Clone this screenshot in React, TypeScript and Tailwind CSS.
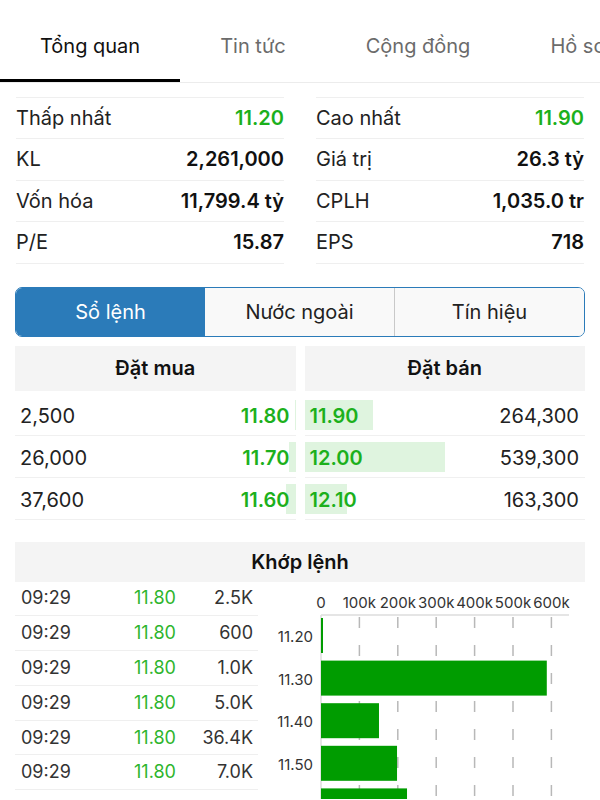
import React from "react";

const TABS = ["Tổng quan", "Tin tức", "Cộng đồng", "Hồ sơ"];

type Stat = { label: string; value: string; tone?: "up" | "ref" };

const STATS: [Stat, Stat][] = [
  [
    { label: "Tham chiếu", value: "11.70", tone: "ref" },
    { label: "Mở cửa", value: "11.80", tone: "up" },
  ],
  [
    { label: "Thấp nhất", value: "11.20", tone: "up" },
    { label: "Cao nhất", value: "11.90", tone: "up" },
  ],
  [
    { label: "KL", value: "2,261,000" },
    { label: "Giá trị", value: "26.3 tỷ" },
  ],
  [
    { label: "Vốn hóa", value: "11,799.4 tỷ" },
    { label: "CPLH", value: "1,035.0 tr" },
  ],
  [
    { label: "P/E", value: "15.87" },
    { label: "EPS", value: "718" },
  ],
];

const BIDS = [
  { qty: "2,500", vol: 2500, price: "11.80" },
  { qty: "26,000", vol: 26000, price: "11.70" },
  { qty: "37,600", vol: 37600, price: "11.60" },
];

const ASKS = [
  { qty: "264,300", vol: 264300, price: "11.90" },
  { qty: "539,300", vol: 539300, price: "12.00" },
  { qty: "163,300", vol: 163300, price: "12.10" },
];

const MATCHES = [
  { time: "09:29", price: "11.80", vol: "2.5K" },
  { time: "09:29", price: "11.80", vol: "600" },
  { time: "09:29", price: "11.80", vol: "1.0K" },
  { time: "09:29", price: "11.80", vol: "5.0K" },
  { time: "09:29", price: "11.80", vol: "36.4K" },
  { time: "09:29", price: "11.80", vol: "7.0K" },
];

const VOL_BY_PRICE = [
  { price: "11.20", vol: 4000 },
  { price: "11.30", vol: 588000 },
  { price: "11.40", vol: 151000 },
  { price: "11.50", vol: 198000 },
  { price: "11.60", vol: 224000 },
];

// px per share for order book depth bars
const DEPTH_SCALE = 0.00026;

function StatCell({ s }: { s: Stat }) {
  const valueClass =
    s.tone === "up"
      ? "text-[#1cb01c] font-semibold"
      : s.tone === "ref"
      ? "text-[#e2b400] font-semibold"
      : "text-[#111] font-semibold";
  return (
    <div className="h-[41.5px] flex items-center justify-between border-b border-[#efefef]">
      <span className="text-[#222]">{s.label}</span>
      <span className={valueClass}>{s.value}</span>
    </div>
  );
}

function VolumeChart() {
  const x0 = 63;
  const perK = 0.384; // px per 1k
  const ticks = [0, 100, 200, 300, 400, 500, 600];
  return (
    <svg width="327" height="217" className="block">
      {/* tick labels */}
      {ticks.map((t) => (
        <text
          key={t}
          x={x0 + t * perK}
          y={26}
          textAnchor="middle"
          fontSize="15"
          fontFamily="Inter, sans-serif"
          fill="#333"
        >
          {t === 0 ? "0" : `${t}k`}
        </text>
      ))}
      <line x1={x0} y1={33} x2={311} y2={33} stroke="#dcdcdc" strokeWidth="1.5" />
      <line x1={x0} y1={33} x2={x0} y2={217} stroke="#dcdcdc" strokeWidth="1.5" />
      {ticks.slice(1).map((t) => (
        <line
          key={t}
          x1={x0 + t * perK}
          y1={35}
          x2={x0 + t * perK}
          y2={217}
          stroke="#b8b8b8"
          strokeWidth="1.5"
          strokeDasharray="11 17"
        />
      ))}
      {VOL_BY_PRICE.map((b, i) => {
        const y = 36 + i * 42.6;
        const w = Math.max(2, (b.vol / 1000) * perK);
        return (
          <g key={b.price}>
            <text
              x={55}
              y={y + 24}
              textAnchor="end"
              fontSize="15"
              fontFamily="Inter, sans-serif"
              fill="#333"
            >
              {b.price}
            </text>
            <rect x={x0} y={y} width={w} height={35} fill="#009c00" />
          </g>
        );
      })}
    </svg>
  );
}

export default function App() {
  return (
    <div className="w-[600px] h-[800px] overflow-hidden bg-white font-['Inter',sans-serif] text-[20px] leading-none">
      {/* Tab bar */}
      <div className="h-[83px] flex whitespace-nowrap border-b border-[#ececec]">
        {TABS.map((t, i) => (
          <div key={t} className="h-[82px] flex flex-col shrink-0">
            <div
              className={`flex-1 flex items-center justify-center px-10 pt-[12px] ${
                i === 0 ? "text-[#111]" : "text-[#6b6b6b]"
              }`}
            >
              {t}
            </div>
            <div className={`h-[3px] ${i === 0 ? "bg-black" : "bg-transparent"}`} />
          </div>
        ))}
      </div>

      <div className="h-[717px] overflow-hidden">
        <div className="-mt-[27px]">
          {/* Stats */}
          <div className="grid grid-cols-2 gap-x-8 px-4">
            {STATS.map(([a, b], i) => (
              <React.Fragment key={i}>
                <StatCell s={a} />
                <StatCell s={b} />
              </React.Fragment>
            ))}
          </div>

          {/* Segmented control */}
          <div className="mt-[23px] mx-[15px] h-[50px] flex rounded-[7px] border border-[#2b7bb9] overflow-hidden">
            <div className="flex-1 flex items-center justify-center bg-[#2b7bb9] text-white">Sổ lệnh</div>
            <div className="flex-1 flex items-center justify-center bg-[#f9f9f9] text-[#222]">Nước ngoài</div>
            <div className="flex-1 flex items-center justify-center bg-[#f9f9f9] text-[#222] border-l border-[#c9c9c9]">
              Tín hiệu
            </div>
          </div>

          {/* Order book */}
          <div className="mt-[9px] px-[15px] flex gap-[9px]">
            <div className="flex-1">
              <div className="h-[45px] bg-[#f4f4f4] flex items-center justify-center font-semibold text-[#111]">
                Đặt mua
              </div>
              <div className="mt-[3px]">
                {BIDS.map((r) => (
                  <div key={r.price} className="relative h-[42px] border-b border-[#f0f0f0]">
                    <div
                      className="absolute right-0 top-[6px] bottom-[5px] bg-[#dff4df]"
                      style={{ width: r.vol * DEPTH_SCALE }}
                    />
                    <div className="relative h-full flex items-center justify-between pl-[5px] pr-[6px] pt-[3px]">
                      <span className="text-[#222]">{r.qty}</span>
                      <span className="text-[#1cb01c] font-semibold">{r.price}</span>
                    </div>
                  </div>
                ))}
              </div>
            </div>
            <div className="flex-1">
              <div className="h-[45px] bg-[#f4f4f4] flex items-center justify-center font-semibold text-[#111]">
                Đặt bán
              </div>
              <div className="mt-[3px]">
                {ASKS.map((r) => (
                  <div key={r.price} className="relative h-[42px] border-b border-[#f0f0f0]">
                    <div
                      className="absolute left-0 top-[6px] bottom-[5px] bg-[#dff4df]"
                      style={{ width: r.vol * DEPTH_SCALE }}
                    />
                    <div className="relative h-full flex items-center justify-between pl-[5px] pr-[6px] pt-[3px]">
                      <span className="text-[#1cb01c] font-semibold">{r.price}</span>
                      <span className="text-[#222]">{r.qty}</span>
                    </div>
                  </div>
                ))}
              </div>
            </div>
          </div>

          {/* Matched orders */}
          <div className="mt-[22px] mx-[15px] h-[40px] bg-[#f4f4f4] flex items-center justify-center font-semibold text-[#111]">
            Khớp lệnh
          </div>
          <div className="flex pl-[15px]">
            <div className="w-[243px] text-[18px]">
              {MATCHES.map((m, i) => (
                <div key={i} className="h-[34.8px] flex items-center border-b border-[#efefef] pl-[6px] pr-[5px]">
                  <span className="w-[90px] text-[#333]">{m.time}</span>
                  <span className="w-[88px] text-center text-[#2db52d]">{m.price}</span>
                  <span className="flex-1 text-right text-[#333]">{m.vol}</span>
                </div>
              ))}
            </div>
            <VolumeChart />
          </div>
        </div>
      </div>
    </div>
  );
}
